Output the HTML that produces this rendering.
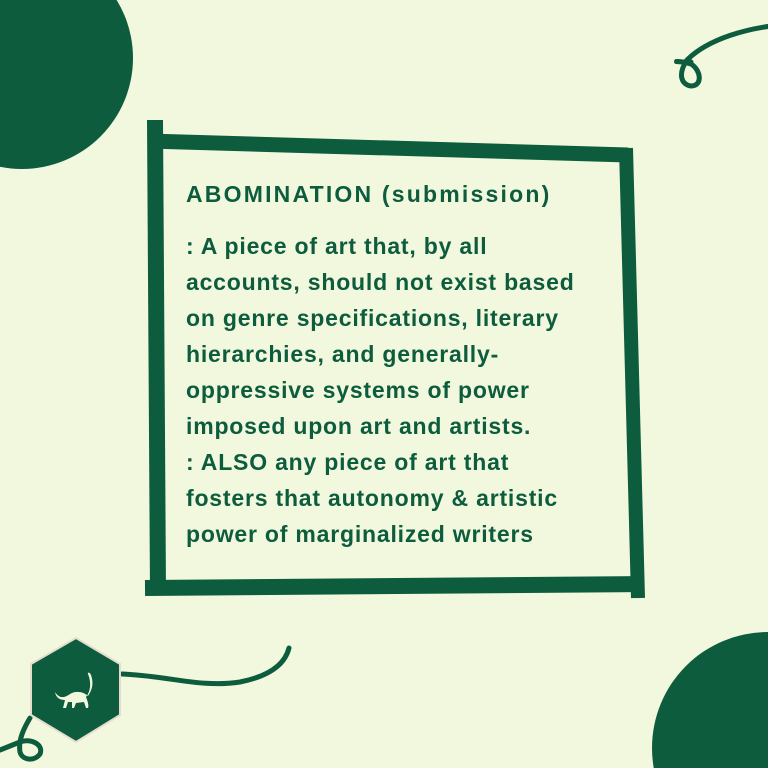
<!DOCTYPE html>
<html><head><style>
html,body{margin:0;padding:0;overflow:hidden}
body{width:768px;height:768px;background:#f2f8dd;position:relative;overflow:hidden;font-family:"Liberation Sans",sans-serif}
.t{position:absolute;left:186px;color:#0d5c3d;font-weight:bold;font-size:23px;white-space:nowrap;line-height:36px;letter-spacing:0.8px}
</style></head><body>
<svg width="768" height="768" style="position:absolute;left:0;top:0">
<circle cx="22" cy="58" r="111" fill="#0d5c3d"/>
<circle cx="768" cy="748" r="116" fill="#0d5c3d"/>
<g stroke="#0d5c3d" fill="none" stroke-linecap="round">
<path d="M768 24 C720 26 680 40 660 60 C650 75 655 85 664 86 C676 86 674 70 664 64 C650 60 640 62 664 62" stroke-width="5" transform="translate(27,0)"/>
<path d="M122 674 C170 676 200 688 240 682 C270 676 285 664 289 648" stroke-width="5"/>
<path d="M30 718 C24 728 18 740 20 752 C22 760 34 762 40 754 C44 744 30 738 20 742 C10 746 5 748 0 750" stroke-width="5"/>
</g>
<g stroke="#0d5c3d" fill="none" stroke-linecap="butt">
<path d="M155 120 L158 592" stroke-width="16"/>
<path d="M148 141 L628 155" stroke-width="15"/>
<path d="M626 148 L638 598" stroke-width="14"/>
<path d="M145 588 L644 584" stroke-width="16"/>
</g>
<polygon points="76,638 120,664 120,715 76,742 31,715 31,664" fill="#0d5c3d" stroke="#e6ddd0" stroke-width="2"/>
<path d="M55 692 C60 700 66 697 70 694 C76 690 84 692 88 696 C92 690 94 684 91 675 C90 672 87 672 88 674 C92 684 90 692 86 697 C88 702 89 706 88 708 L86 708 L84 702 L76 703 L74 708 L72 708 L72 702 L68 702 L66 708 L63 708 L65 700 C60 700 56 698 55 692 Z" fill="#f2f8dd"/>
</svg>
<div class="t" style="top:176px;letter-spacing:2.2px">ABOMINATION (submission)</div>
<div class="t" style="top:228px">: A piece of art that, by all<br>accounts, should not exist based<br>on genre specifications, literary<br>hierarchies, and generally-<br>oppressive systems of power<br>imposed upon art and artists.<br>: ALSO any piece of art that<br>fosters that autonomy &amp; artistic<br>power of marginalized writers</div>
</body></html>
